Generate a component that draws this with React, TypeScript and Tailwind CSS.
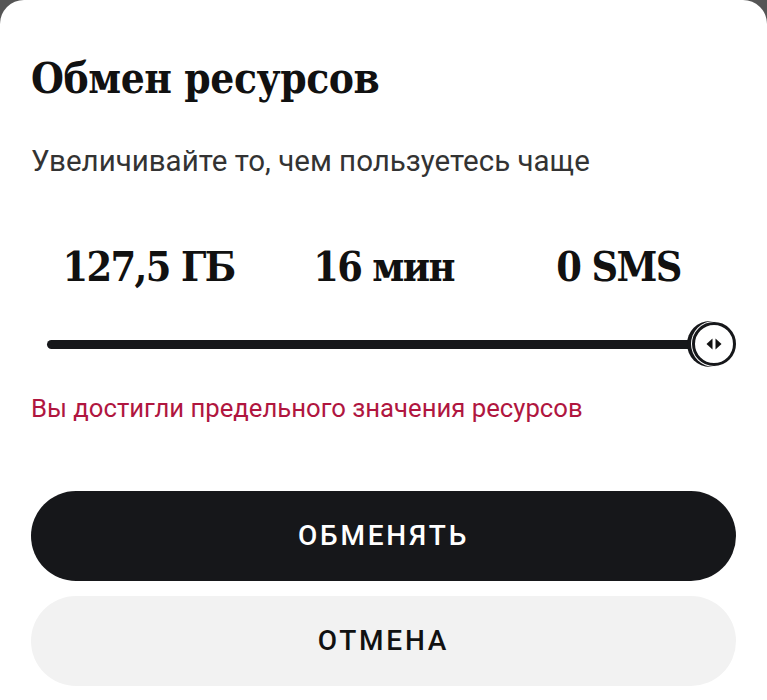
const slab = { fontFamily: "'DejaVu Serif Condensed', 'DejaVu Serif', serif" };
const sans = { fontFamily: "Roboto, 'Noto Sans', sans-serif" };

const ThumbArrows = () => (
  <svg width="16" height="12" viewBox="0 0 16 12" fill="#111">
    <path d="M6.5 0.5 L0.5 6 L6.5 11.5 Z" />
    <path d="M9.5 0.5 L15.5 6 L9.5 11.5 Z" />
  </svg>
);

const App = (): JSX.Element => {
  const values = ['127,5 ГБ', '16 мин', '0 SMS'];
  return (
    <div className="h-[700px] w-full bg-[#555555] overflow-hidden">
      <div className="h-full bg-white rounded-t-[24px] px-[31px] flex flex-col" style={sans}>
        <h1
          className="mt-[53px] text-[42px] leading-[52px] font-bold text-[#111] tracking-[-0.01em] font-stretch-condensed"
          style={slab}
        >
          Обмен ресурсов
        </h1>
        <p className="mt-[38px] text-[29.5px] leading-[36px] text-[#333]">
          Увеличивайте то, чем пользуетесь чаще
        </p>

        <div className="mt-[62px] grid grid-cols-3">
          {values.map((v) => (
            <div
              key={v}
              className="text-center text-[41px] leading-[52px] font-bold text-[#111] tracking-[-0.04em] font-stretch-condensed"
              style={slab}
            >
              {v}
            </div>
          ))}
        </div>

        <div className="mt-[29px] flex items-center pl-[16px] pr-0">
          <div className="flex-1 h-[9px] rounded-full bg-[#16171a]" />
          <div className="-ml-[8px] w-[44px] h-[44px] rounded-full bg-white border-[3px] border-[#16171a] shadow-[0_0_0_1px_#fff,-4px_0_0_1px_#16171a] flex items-center justify-center">
            <ThumbArrows />
          </div>
        </div>

        <p className="mt-[25px] text-[25.7px] leading-[34px] text-[#b0163f]">
          Вы достигли предельного значения ресурсов
        </p>

        <button className="mt-[66px] h-[90px] w-full shrink-0 rounded-full bg-[#16171a] text-white text-[28px] font-medium tracking-[0.1em] flex items-center justify-center">
          ОБМЕНЯТЬ
        </button>
        <button className="mt-[15px] h-[90px] w-full shrink-0 rounded-full bg-[#f2f2f2] text-[#111] text-[28px] font-medium tracking-[0.1em] flex items-center justify-center">
          ОТМЕНА
        </button>
      </div>
    </div>
  );
};

export default App;
